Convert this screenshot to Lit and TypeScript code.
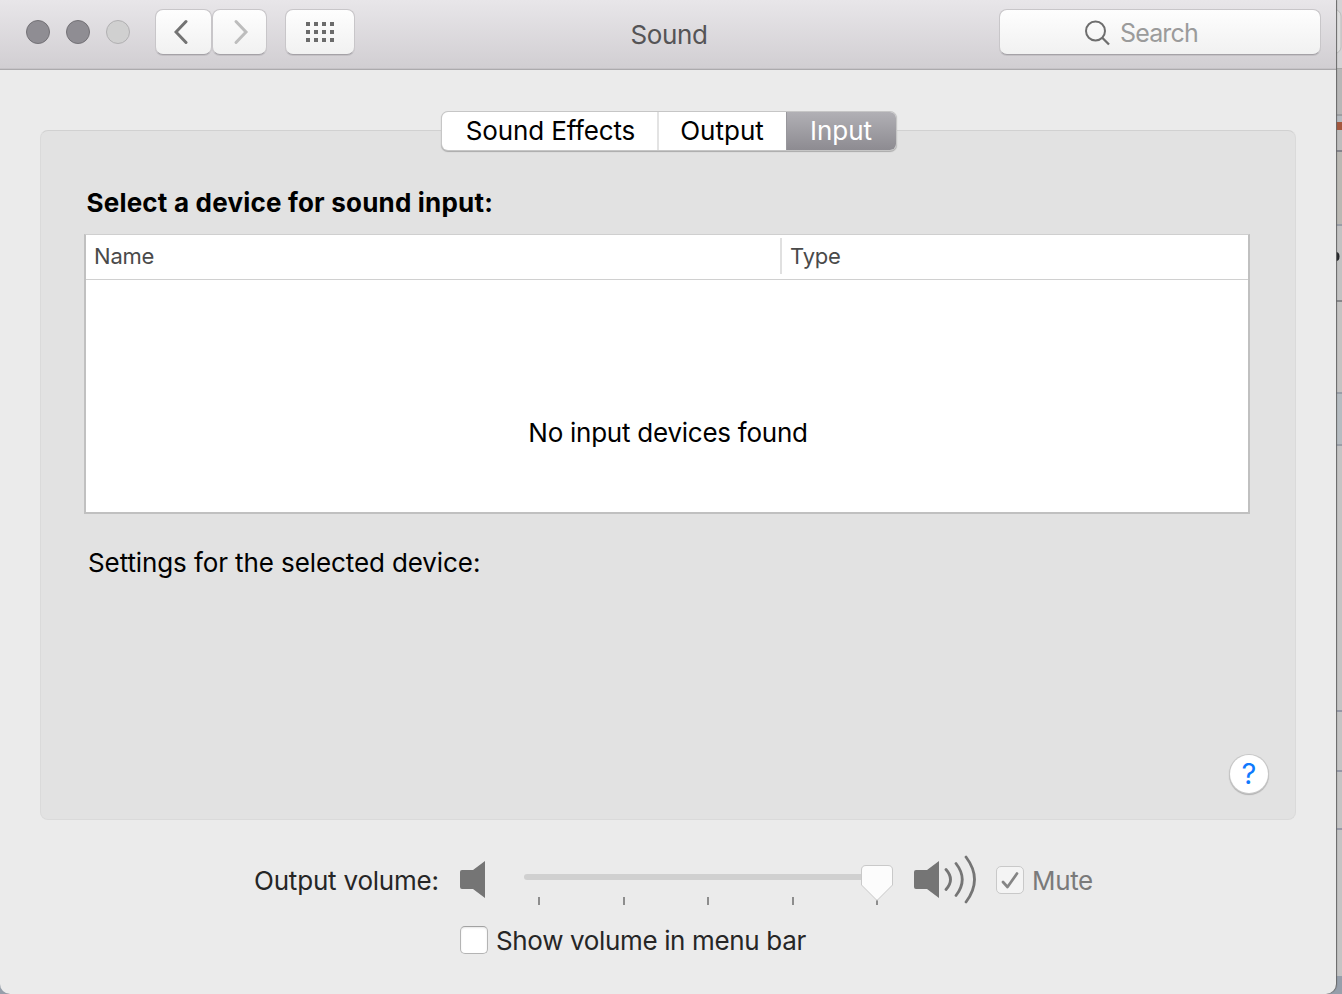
import { LitElement, html, css, svg } from "lit";
import { customElement, property, state } from "lit/decorators.js";
import { classMap } from "lit/directives/class-map.js";

// speaker icon, with or without the sound waves
@customElement("volume-icon")
export class VolumeIcon extends LitElement {
  @property({ type: Boolean }) loud = false;

  static styles = css`
    :host {
      display: block;
    }
    svg {
      display: block;
    }
  `;

  render() {
    return html`
      <svg width=${this.loud ? 64 : 26} height="50" viewBox="0 0 ${this.loud ? 64 : 26} 50">
        <path fill="#757575" d="M2 15H13L25 6V43L13 34H2Q0 34 0 32V17Q0 15 2 15Z" />
        ${this.loud
          ? svg`<path fill="none" stroke="#757575" stroke-width="2.8" stroke-linecap="round"
              d="M32 14.5Q41 24.500 32 34.500M42 8.500Q54.500 24.500 42 40.500M52 2Q69 24.500 52 47" />`
          : ""}
      </svg>
    `;
  }
}

@customElement("check-box")
export class CheckBox extends LitElement {
  @property({ type: Boolean }) checked = false;
  @property({ type: Boolean }) disabled = false;

  static styles = css`
    :host {
      display: flex;
      align-items: center;
      gap: 8px;
      color: #262626;
      letter-spacing: -0.35px;
    }
    .box {
      box-sizing: border-box;
      width: 28px;
      height: 28px;
      border: 1px solid #b4b4b4;
      border-top-color: #a2a2a2;
      border-radius: 5px;
      background: #fff;
      box-shadow: inset 0 1px 2px #e6e6e6;
    }
    .box.disabled {
      border-color: #c9c9c9;
      background: #f4f4f4;
      box-shadow: none;
    }
    .label {
      padding-top: 2px;
      margin-bottom: -1px;
    }
    .label.disabled {
      padding-top: 0;
      color: #7a7a7a;
    }
    svg {
      display: block;
    }
  `;

  render() {
    const classes = { disabled: this.disabled };
    return html`
      <div class=${classMap({ box: true, ...classes })}>
        ${this.checked
          ? html`<svg width="26" height="26" viewBox="0 0 26 26">
              <path d="M6 15L10.5 20L20 6.5" fill="none" stroke="#858585" stroke-width="2.7"
                stroke-linecap="round" stroke-linejoin="round" />
            </svg>`
          : ""}
      </div>
      <span class=${classMap({ label: true, ...classes })}><slot></slot></span>
    `;
  }
}

@customElement("app-root")
export class AppRoot extends LitElement {
  @state() tab = "Input";

  tabs = [
    { name: "Sound Effects", cls: "effects" },
    { name: "Output", cls: "output" },
    { name: "Input", cls: "input" },
  ];

  // [height, color] of the window that peeks out at the right
  behind: [number, string][] = [
    [68, "#d4d3d5"], [1, "#a9a9a9"], [45, "#b7b7b7"], [2, "#9d9fa2"], [6, "#b5bbc0"],
    [8, "#a3573d"], [20, "#bdbdbd"], [2, "#85858d"], [72, "#bab8b3"], [2, "#9a9ea7"],
    [74, "#c2c2c2"], [2, "#88888b"], [90, "#c4c3c2"], [2, "#9a9fa8"], [50, "#b5bcc1"],
    [2, "#9a9fa8"], [264, "#c4c4c4"], [2, "#9699a7"], [58, "#c4c4c4"], [2, "#9699a7"],
    [56, "#c4c4c4"], [2, "#9699a7"], [146, "#c4c4c4"], [18, "#969fab"],
  ];

  static styles = css`
    :host {
      display: block;
      position: relative;
      width: 1342px;
      height: 994px;
      overflow: hidden;
      font-family: Inter, "Liberation Sans", sans-serif;
      font-size: 26px;
      line-height: 32px;
      color: #000;
    }
    .behind {
      position: absolute;
      inset: 0;
      background: #969fab;
    }
    .window {
      position: relative;
      box-sizing: border-box;
      width: 1336px;
      height: 994px;
      background: #ebebeb;
      border-radius: 0 0 10px 10px;
      box-shadow: 1px 0 1px #666;
      overflow: hidden;
      display: flex;
      flex-direction: column;
    }
    .titlebar {
      box-sizing: border-box;
      height: 70px;
      flex: none;
      padding: 9px 15px 0 26px;
      display: grid;
      grid-template-columns: 1fr auto 1fr;
      background: linear-gradient(#e8e6e9, #d1ced2);
      border-bottom: 1px solid #acaaad;
      box-shadow: inset 0 -1px #c6c3c7;
    }
    .controls {
      display: flex;
      align-items: flex-start;
    }
    .light {
      box-sizing: border-box;
      width: 24px;
      height: 24px;
      margin: 11px 16px 0 0;
      border: 1px solid #737176;
      border-radius: 50%;
      background: #8f8d93;
    }
    .light.off {
      border-color: #b1b0b2;
      background: #d0d0d0;
      margin-right: 25px;
    }
    .button {
      box-sizing: border-box;
      height: 46px;
      border: 1px solid #c8c6c9;
      border-bottom-color: #a5a2a7;
      border-radius: 8px;
      background: linear-gradient(#fefefe, #f1f1f1);
      box-shadow: 0 1px #c4c1c5;
      display: flex;
      align-items: center;
      justify-content: center;
    }
    .back {
      width: 57px;
    }
    .forward {
      width: 55px;
      margin-right: 18px;
    }
    .grid {
      width: 70px;
    }
    .title {
      color: #555456;
      padding: 10px 9px 0 0;
      letter-spacing: -0.4px;
    }
    .search {
      width: 322px;
      justify-self: end;
      justify-content: flex-start;
      padding-left: 84px;
      gap: 9px;
      color: #9b9b9b;
      font-size: 25px;
      letter-spacing: -0.85px;
    }
    .search span {
      padding-top: 2px;
    }
    .content {
      flex: 1;
      display: flex;
      flex-direction: column;
      padding: 60px 40px 0;
    }
    .panel {
      box-sizing: border-box;
      height: 690px;
      border: 1px solid #dadada;
      border-top-color: #d1d1d1;
      border-radius: 8px;
      background: #e2e2e2;
      padding: 0 26px 0 43px;
      display: flex;
      flex-direction: column;
    }
    .tabs {
      display: flex;
      align-self: center;
      box-sizing: border-box;
      height: 38px;
      margin: -19px 0 0 -15px;
      border-radius: 6px;
      background: #fff;
      box-shadow: 0 0 0 1px #c6c6c6, 0 1px 1px 1px #aaa;
      overflow: hidden;
    }
    .tab {
      box-sizing: border-box;
      display: flex;
      align-items: center;
      justify-content: center;
    }
    .effects {
      width: 217px;
      padding-left: 2px;
      letter-spacing: -0.15px;
      border-right: 2px solid #e3e3e3;
    }
    .output {
      width: 128px;
      padding-right: 2px;
    }
    .input {
      width: 109px;
      padding-right: 1px;
    }
    .active {
      color: #fff;
      background: linear-gradient(#b1b0b5, #8d8b91);
      box-shadow: 0 0 0 1px #98979c;
    }
    .heading {
      font-weight: 700;
      letter-spacing: 0.2px;
      margin: 37px 0 15px 2.5px;
    }
    .table {
      box-sizing: border-box;
      width: 1166px;
      height: 280px;
      border: 2px solid #c0c0c0;
      border-top: 1px solid #cfcfcf;
      background: #fff;
      display: flex;
      flex-direction: column;
    }
    .columns {
      box-sizing: border-box;
      height: 45px;
      border-bottom: 1px solid #d0d0d0;
      display: grid;
      grid-template-columns: 694px 1fr;
      padding-top: 3px;
      font-size: 22px;
      letter-spacing: -0.2px;
      color: #4a4a4a;
    }
    .column {
      height: 36px;
      line-height: 36px;
      padding-left: 8px;
    }
    .column + .column {
      border-left: 2px solid #e0e0e0;
      padding-left: 8px;
    }
    .empty {
      text-align: center;
      padding: 137px 0 0 2px;
      letter-spacing: -0.25px;
    }
    .settings {
      margin: 33px 0 0 4px;
      letter-spacing: -0.1px;
    }
    .help {
      align-self: flex-end;
      margin: auto 1px 26px 0;
      width: 38px;
      height: 38px;
      border-radius: 50%;
      background: #fff;
      box-shadow: 0 0 0 1px #c8c8c8, 0 1px 1px 1px #b0b0b0;
      color: #0f7afe;
      font-size: 29px;
      line-height: 38px;
      text-align: center;
    }
    .volume {
      display: flex;
      align-items: center;
      height: 50px;
      margin-top: 35px;
      padding-left: 214px;
    }
    .volume-label {
      width: 206px;
      padding-top: 2px;
      color: #262626;
      letter-spacing: -0.2px;
      white-space: nowrap;
    }
    .slider {
      display: block;
      margin: 0 20px 0 38px;
    }
    .mute {
      margin-left: 18px;
    }
    .menubar {
      margin: 18px 0 0 420px;
      align-self: flex-start;
    }
  `;

  render() {
    let y = 0;
    return html`
      <svg class="behind" width="1342" height="994">
        ${this.behind.map(([h, color]) => {
          const band = svg`<rect x="1330" y=${y} width="12" height=${h} fill=${color} />`;
          y += h;
          return band;
        })}
        <rect x="1330" y="10" width="11" height="43" rx="6" fill="#dddddd" stroke="#bcbcbc" />
        <ellipse cx="1336" cy="256.500" rx="3.500" ry="4.500" fill="#26282c" />
      </svg>
      <div class="window">
        <div class="titlebar">
          <div class="controls">
            <span class="light"></span>
            <span class="light"></span>
            <span class="light off"></span>
            <div class="button back">
              <svg width="20" height="26" viewBox="0 0 20 26">
                <path d="M12 2.5L2 13L12 23.5" fill="none" stroke="#737373" stroke-width="3" stroke-linecap="round" />
              </svg>
            </div>
            <div class="button forward">
              <svg width="20" height="26" viewBox="0 0 20 26">
                <path d="M6 2.5L16 13L6 23.5" fill="none" stroke="#bdbdbd" stroke-width="3" stroke-linecap="round" />
              </svg>
            </div>
            <div class="button grid">
              <svg width="28" height="20" fill="#6b6b6b">
                ${[0, 8, 16].map((gy) =>
                  [0, 8, 16, 24].map((gx) => svg`<rect x=${gx} y=${gy} width="4" height="4" />`)
                )}
              </svg>
            </div>
          </div>
          <div class="title">Sound</div>
          <div class="button search">
            <svg width="27" height="27" viewBox="0 0 27 27" fill="none" stroke="#6e6e6e" stroke-width="2">
              <circle cx="11.5" cy="12" r="9.5" />
              <path d="M18 18.500L25 25.500" stroke-width="2.3" />
            </svg>
            <span>Search</span>
          </div>
        </div>
        <div class="content">
          <div class="panel">
            <div class="tabs">
              ${this.tabs.map(
                (t) => html`<div
                  class=${classMap({ tab: true, [t.cls]: true, active: this.tab === t.name })}
                  @click=${() => (this.tab = t.name)}
                ><span>${t.name}</span></div>`
              )}
            </div>
            <div class="heading"><span>Select a device for sound input:</span></div>
            <div class="table">
              <div class="columns">
                <div class="column">Name</div>
                <div class="column">Type</div>
              </div>
              <div class="empty">No input devices found</div>
            </div>
            <div class="settings">Settings for the selected device:</div>
            <div class="help">?</div>
          </div>
          <div class="volume">
            <div class="volume-label">Output volume:</div>
            <volume-icon></volume-icon>
            <svg class="slider" width="370" height="50" viewBox="0 0 370 50">
              <rect x="0" y="19" width="350" height="6" rx="3" fill="#d0d0d0" />
              ${[14, 99, 183, 268, 352].map(
                (x) => svg`<rect x=${x} y="42" width="2" height="8" fill="#8d8d8d" />`
              )}
              <path fill="#fcfcfc" stroke="#c9c9c9"
                d="M342 10.5H364Q368.5 10.5 368.5 15V30L353 45.5L337.500 30V15Q337.500 10.500 342 10.500Z" />
            </svg>
            <volume-icon loud></volume-icon>
            <check-box class="mute" checked disabled>Mute</check-box>
          </div>
          <check-box class="menubar">Show volume in menu bar</check-box>
        </div>
      </div>
    `;
  }
}
